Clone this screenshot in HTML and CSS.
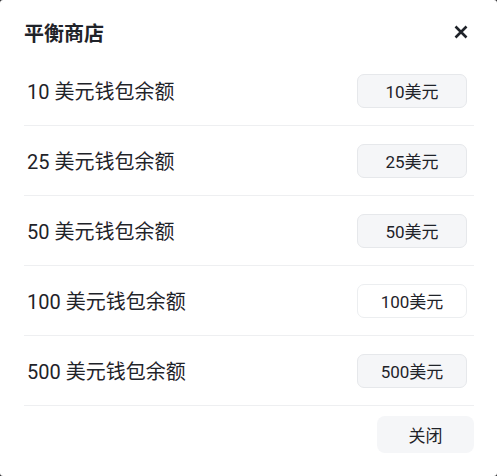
FILE: index.html
```html
<!DOCTYPE html>
<html lang="zh-CN">
<head>
  <meta charset="UTF-8" />
  <meta name="viewport" content="width=device-width, initial-scale=1.0" />
  <title>平衡商店</title>
  <link rel="stylesheet" href="styles.css">
</head>
<body>
  <div class="dialog">
    <div class="dialog-header">
      <h1>平衡商店</h1>
      <button class="close-icon" aria-label="关闭">
        <svg width="14" height="14" viewBox="0 0 14 14"><path d="M1.5 1.5 L12.5 12.5 M12.5 1.5 L1.5 12.5" stroke="#1f2329" stroke-width="2.6" stroke-linecap="butt"/></svg>
      </button>
    </div>
    <ul class="item-list">
      <li class="item"><span class="item-name">10 美元钱包余额</span><button class="buy-button">10美元</button></li>
      <li class="item"><span class="item-name">25 美元钱包余额</span><button class="buy-button">25美元</button></li>
      <li class="item"><span class="item-name">50 美元钱包余额</span><button class="buy-button">50美元</button></li>
      <li class="item"><span class="item-name">100 美元钱包余额</span><button class="buy-button plain">100美元</button></li>
      <li class="item"><span class="item-name">500 美元钱包余额</span><button class="buy-button">500美元</button></li>
    </ul>
    <div class="dialog-footer">
      <button class="close-button">关闭</button>
    </div>
  </div>
</body>
</html>
```

FILE: styles.css
```css
body {
  margin: 0;
  background: #2a2a2e;
  font-family: Roboto, "Noto Sans CJK SC", sans-serif;
  color: #1f2329;
}
.dialog {
  width: 497px;
  height: 476px;
  box-sizing: border-box;
  background: #fff;
  border-radius: 3px;
  padding: 15px 23px 23px 24px;
}
.dialog-header {
  display: flex;
  align-items: center;
  justify-content: space-between;
  height: 41px;
}
.dialog-header h1 {
  margin: 0;
  font-size: 20px;
  font-weight: 700;
  line-height: 1;
  margin-top: -4px;
}
.close-icon {
  border: none;
  background: none;
  padding: 0;
  width: 14px;
  height: 14px;
  margin-right: 6px;
  margin-top: -7px;
  cursor: pointer;
}
.item-list {
  list-style: none;
  margin: 0;
  padding: 0;
}
.item {
  display: flex;
  align-items: center;
  justify-content: space-between;
  height: 69px;
  border-bottom: 1px solid #eeeff1;
  padding: 0 7px 0 3px;
}
.item-name {
  font-size: 20px;
}
.buy-button {
  width: 110px;
  height: 34px;
  box-sizing: border-box;
  border: 1.5px solid #e6e8eb;
  border-radius: 7px;
  background: #f5f6f8;
  font-family: inherit;
  font-size: 17px;
  color: #1f2329;
  cursor: pointer;
}
.buy-button.plain {
  background: #fff;
  border-color: #eceef0;
}
.dialog-footer {
  display: flex;
  justify-content: flex-end;
  margin-top: 10px;
}
.close-button {
  width: 97px;
  height: 37px;
  border: none;
  border-radius: 8px;
  background: #f5f6f8;
  font-family: inherit;
  font-size: 17px;
  color: #1f2329;
  cursor: pointer;
}
```
